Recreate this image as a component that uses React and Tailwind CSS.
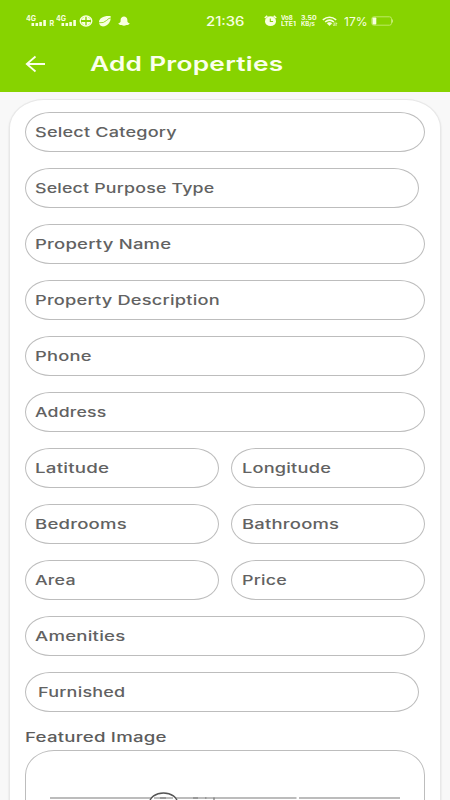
import { useLayoutEffect, useRef, useState } from "react";

// Text stretched horizontally to a given width, like a wide geometric face.
function WideText({ width, className = "", children }) {
  const ref = useRef(null);
  const [scale, setScale] = useState(1);
  useLayoutEffect(() => {
    setScale(width / ref.current.offsetWidth);
  }, [width]);
  return (
    <span className="block whitespace-nowrap" style={{ width }}>
      <span
        ref={ref}
        className={"inline-block origin-left " + className}
        style={{ transform: `scaleX(${scale})` }}
      >
        {children}
      </span>
    </span>
  );
}

function Field({ label, width, className = "w-[400px] pl-[9px]" }) {
  return (
    <div
      className={
        "flex h-10 shrink-0 items-center rounded-[25px/20px] border border-[#bdbdbd] bg-white pb-[3px] " +
        className
      }
    >
      <WideText width={width} className="text-[13.5px] leading-5 font-medium tracking-[0.15px] text-[#626262]">
        {label}
      </WideText>
    </div>
  );
}

const half = "w-[194px] pl-[9px]";

function Signal() {
  return (
    <svg className="h-[14px] w-[21px]" viewBox="0 0 21 14" fill="#f8ffe0">
      <text x="0" y="6.5" fontSize="7" fontWeight="700" textLength="10" lengthAdjust="spacingAndGlyphs">4G</text>
      <path d="M5.500 9h2.600v2.900H5.500zM9.500 9h2.600v2.900H9.500zM13.300 8h2.600v3.900h-2.600zM17.300 6h2.600v5.900h-2.600z" />
    </svg>
  );
}

function StatusBar() {
  return (
    <div className="flex h-[42px] items-center pl-[26px] text-[#f8ffe0]">
      <Signal />
      <span className="mt-[5px] ml-[2.5px] w-[6.5px] text-[7px] leading-[7px] font-bold">R</span>
      <Signal />
      <svg className="ml-[2px] h-3 w-[14px]" viewBox="0 0 14 12">
        <ellipse cx="7" cy="6" rx="5.800" ry="5" fill="none" stroke="#f8ffe0" strokeWidth="1.300" />
        <path d="M2.500 5V4l2.500-2h1.300v3zM11.500 5V4L9 2H7.700v3zM2.500 7v1L5 10h1.300V7zM11.500 7v1L9 10H7.700V7z" fill="#f8ffe0" />
      </svg>
      <svg className="ml-[5px] h-3 w-[14px]" viewBox="0 0 14 12">
        <path d="M1 7C1 3 6 .3 12.500 1c1 3-1 9-6 10.300C3 12 1 10 1 7z" fill="#f8ffe0" />
        <path d="M.5 7.800Q6 8.300 8.500 5.500T13 3" fill="none" stroke="#87d300" strokeWidth=".8" />
      </svg>
      <svg className="ml-[6px] h-3 w-3" viewBox="0 0 12 12" fill="#f8ffe0">
        <path d="M2.600 5C2.600.3 9.400.3 9.400 5v1.500c.4 1 1.300 1.500 2.300 1.900-.3 1-1.500.8-2 1.600-1.300-.2-2 .7-3.700.7s-2.400-.9-3.700-.7c-.5-.8-1.700-.6-2-1.600 1-.4 1.900-.9 2.300-1.900z" />
      </svg>
      <div className="-mt-[2px] ml-[75.5px]">
        <WideText width={38} className="text-[12.500px] leading-4 font-medium">21:36</WideText>
      </div>
      <svg className="ml-[20.5px] h-3 w-[13px]" viewBox="0 0 13 12">
        <path d="M.8 3 3.300.8M12.200 3 9.700.8" stroke="#f8ffe0" strokeWidth="1.600" />
        <ellipse cx="6.500" cy="6.200" rx="5.500" ry="4.900" fill="#f8ffe0" />
        <path d="M6.300 3.500v3h2.800" fill="none" stroke="#87d300" strokeWidth="1.100" />
      </svg>
      <div className="ml-[4px] w-[15px] text-[5.500px] leading-[6px] font-bold">
        <WideText width={12}>Vo8</WideText>
        <WideText width={15}>LTE1</WideText>
      </div>
      <div className="ml-[5px] w-[15px] text-[5.500px] leading-[6px] font-bold">
        <WideText width={15}>3.50</WideText>
        <WideText width={14}>KB/s</WideText>
      </div>
      <svg className="ml-[6px] h-[11px] w-[16px]" viewBox="0 0 16 11" fill="none" stroke="#f8ffe0">
        <path d="M.8 3.800Q7.500-1.500 14.200 3.800M3.100 6Q7.500 2.300 11.900 6" strokeWidth="1.500" />
        <path d="m5 7.300 2.500 2.500L10 7.300Q7.500 5.300 5 7.300z" fill="#f8ffe0" strokeWidth=".4" />
        <path d="M12.200 6.500v3.200m-1-1 1 1.200M14 10V6.800m1 1-1-1.200" strokeWidth=".8" />
      </svg>
      <div className="-mt-[2px] ml-[5.5px]">
        <WideText width={23} className="text-[11.500px] leading-4">17%</WideText>
      </div>
      <svg className="ml-[4.5px] h-[10px] w-[23px]" viewBox="0 0 23 10">
        <rect x=".8" y=".8" width="19.700" height="8.400" rx="2" fill="none" stroke="#c4ec70" strokeWidth=".9" />
        <path d="M21.500 3.500v3" stroke="#c4ec70" />
        <rect x="1.500" y="1.500" width="3.800" height="7" rx=".8" fill="#f8ffe0" />
      </svg>
    </div>
  );
}

export default function App() {
  return (
    <div className="h-[800px] w-[450px] overflow-hidden bg-[#f8f8f8] font-['Inter','Liberation_Sans',sans-serif]">
      <header className="h-[92px] bg-[#87d300]">
        <StatusBar />
        <div className="flex h-[44px] items-center pl-[25px]">
          <svg className="h-[18px] w-[21px]" viewBox="0 0 21 18" fill="none" stroke="#fbffec" strokeWidth="1.800">
            <path d="M20 9H1.800M10.500 1.500 1.800 9l8.700 7.500" />
          </svg>
          <h1 className="ml-[44px]">
            <WideText width={193} className="text-[20px] leading-7 font-semibold tracking-[0.2px] text-[#fbffec]">
              Add Properties
            </WideText>
          </h1>
        </div>
      </header>
      <main className="mx-[9px] mt-[7px] flex h-[740px] flex-col gap-4 rounded-t-[35px_29px] border border-[#e8e8e8] bg-white px-[15px] pt-3 shadow-[0_1px_2px_rgba(0,0,0,0.14)]">
        <Field label="Select Category" width={142} />
        <Field label="Select Purpose Type" width={179} className="w-[394px] pl-[9px]" />
        <Field label="Property Name" width={137} />
        <Field label="Property Description" width={185} />
        <Field label="Phone" width={57} />
        <Field label="Address" width={72} />
        <div className="flex justify-between">
          <Field label="Latitude" width={75} className={half} />
          <Field label="Longitude" width={89} className="w-[194px] pl-[9.5px]" />
        </div>
        <div className="flex justify-between">
          <Field label="Bedrooms" width={92} className={half} />
          <Field label="Bathrooms" width={97} className="w-[194px] pl-[9.5px]" />
        </div>
        <div className="flex justify-between">
          <Field label="Area" width={41} className={half} />
          <Field label="Price" width={45} className="w-[194px] pl-[9.5px]" />
        </div>
        <Field label="Amenities" width={91} />
        <Field label="Furnished" width={88} className="w-[394px] pl-[12px]" />
        <section>
          <h2 className="-mt-1 h-[27px]">
            <WideText width={141} className="text-[13.500px] leading-5 font-medium tracking-[0.15px] text-[#5c5c5c]">
              Featured Image
            </WideText>
          </h2>
          <div className="-mt-px h-[80px] w-[400px] rounded-t-[29px_25px] border border-[#bdbdbd]">
            <svg className="mt-[40px] ml-[24px] h-[12px] w-[352px]" viewBox="0 0 352 12" fill="none">
              <path d="M0 7h246.500M249 7h101" stroke="#bcbcbc" strokeWidth="2" />
              <ellipse cx="113.500" cy="12" rx="14" ry="10" fill="#fff" stroke="#555" strokeWidth="1.400" />
              <path d="M104 7h19" stroke="#bcbcbc" strokeWidth="2" />
              <path d="M110 7h6M143 7h5M155 7h1.500M164 6.500V9" stroke="#777" strokeWidth="1.200" />
            </svg>
          </div>
        </section>
      </main>
    </div>
  );
}
